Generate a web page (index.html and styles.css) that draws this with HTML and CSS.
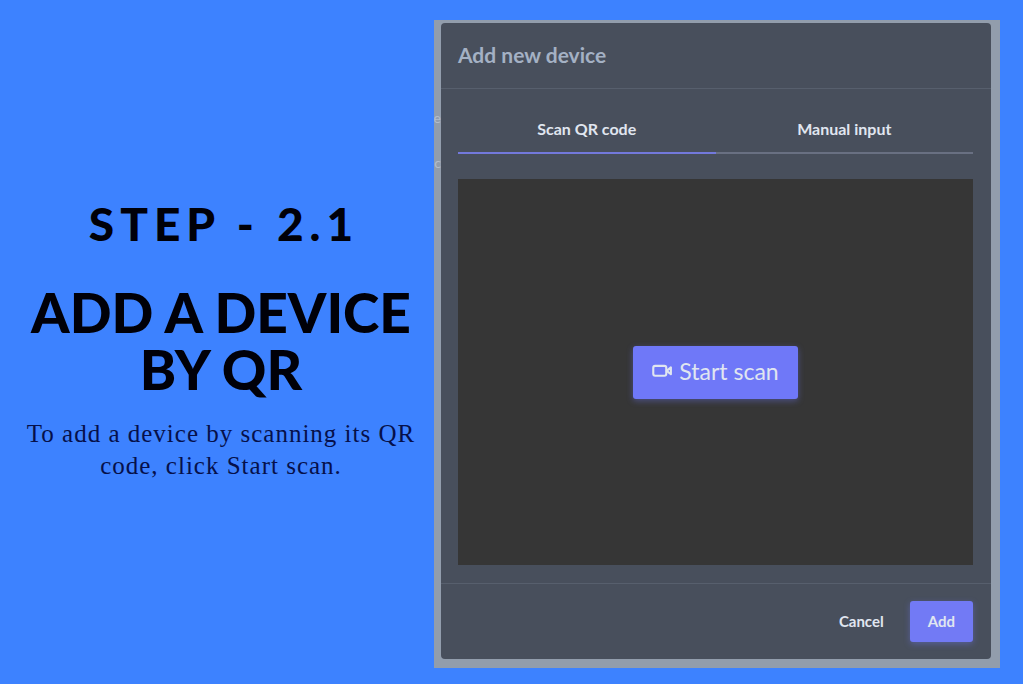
FILE: index.html
```html
<!DOCTYPE html>
<html lang="en">
<head>
<meta charset="utf-8">
<meta name="viewport" content="width=device-width, initial-scale=1">
<title>Add a device by QR</title>
<link rel="stylesheet" href="styles.css">
</head>
<body>
<main class="slide">
  <section class="intro">
    <p class="step">STEP - 2.1</p>
    <h1 class="title">ADD A DEVICE<br>BY QR</h1>
    <p class="lead">To add a device by scanning its QR<br>code, click Start scan.</p>
  </section>
  <div class="backdrop">
    <span class="ghost ghost-first" aria-hidden="true">te</span>
    <span class="ghost ghost-second" aria-hidden="true">c</span>
    <section class="dialog" role="dialog" aria-labelledby="dialog-title">
      <header class="dialog-header">
        <h2 class="dialog-title" id="dialog-title">Add new device</h2>
      </header>
      <div class="dialog-body">
        <div class="tabs" role="tablist">
          <button class="tab tab-active" type="button" role="tab" aria-selected="true">Scan QR code</button>
          <button class="tab" type="button" role="tab" aria-selected="false">Manual input</button>
        </div>
        <div class="scanner">
          <button class="scan-button" type="button">
            <svg class="camera" viewBox="0 0 20 14" aria-hidden="true">
              <rect x="1.2" y="1.8" width="12.4" height="9.4" rx="1.8"/>
              <path d="M14 6.5 18 3.2v6.6Z"/>
            </svg>
            <span>Start scan</span>
          </button>
        </div>
      </div>
      <footer class="dialog-footer">
        <button class="cancel" type="button">Cancel</button>
        <button class="add" type="button">Add</button>
      </footer>
    </section>
  </div>
</main>
</body>
</html>
```
FILE: styles.css
```css
* { box-sizing: border-box; }
body {
  margin: 0;
  background: #3d82ff;
  font-family: Lato, "Open Sans", sans-serif;
}
button {
  border: 0;
  padding: 0;
  background: none;
  color: #e0e6f0;
  font: inherit;
  cursor: pointer;
}
.slide {
  display: grid;
  grid-template-columns: 434fr 566fr;
  min-height: 100vh;
  padding: 20px 23px 16px 0;
}
.intro {
  display: flex;
  flex-direction: column;
  justify-content: center;
  padding: 0 0 10px 8px;
  color: #000008;
  text-align: center;
}
.step {
  margin: 0 0 32px;
  padding-left: 6px;
  font-size: 46px;
  font-weight: 900;
  line-height: 56px;
  letter-spacing: 6px;
}
.title {
  margin: 0 0 20px;
  font-size: 55px;
  font-weight: 900;
  line-height: 57px;
}
.lead {
  margin: 0;
  color: #06104a;
  font-family: "Liberation Serif", serif;
  font-size: 25px;
  line-height: 32px;
  letter-spacing: 1px;
}
.backdrop {
  position: relative;
  display: flex;
  overflow: hidden;
  padding: 3px 9px 9px 7px;
  background: #929dac;
}
.ghost {
  position: absolute;
  right: calc(100% - 7px);
  color: #b3bcca;
  font-size: 14px;
  line-height: 20px;
}
.ghost-first { top: 88px; }
.ghost-second { top: 133px; }
.dialog {
  position: relative;
  display: flex;
  flex: 1;
  flex-direction: column;
  border-radius: 4px;
  background: #484f5c;
}
.dialog-header {
  padding: 17px 17px 19px;
  border-bottom: 1px solid #575f6d;
}
.dialog-title {
  margin: 0;
  color: #a4b1c4;
  font-size: 21px;
  font-weight: 700;
  line-height: 29px;
}
.dialog-body {
  display: flex;
  flex: 1;
  flex-direction: column;
  gap: 25px;
  padding: 17px 18px 18px 17px;
}
.tabs {
  display: grid;
  grid-template-columns: 1fr 1fr;
}
.tab {
  height: 48px;
  padding-bottom: 2px;
  border-bottom: 2px solid #697082;
  font-size: 16px;
  font-weight: 700;
}
.tab-active { border-color: #7379dc; }
.scanner {
  display: flex;
  flex: 1;
  align-items: center;
  justify-content: center;
  background: #363636;
}
.scan-button {
  display: flex;
  align-items: center;
  gap: 6px;
  padding: 11px 19px 13px;
  border-radius: 3px;
  background: #6f78f8;
  box-shadow: 0 2px 6px #6f78f866;
  font-size: 23px;
  line-height: 29px;
}
.camera {
  width: 21px;
  fill: none;
  stroke: #e0e6f0;
  stroke-width: 2;
  stroke-linejoin: round;
}
.dialog-footer {
  display: flex;
  align-items: center;
  justify-content: flex-end;
  gap: 26px;
  padding: 17px 18px;
  border-top: 1px solid #575f6d;
  font-size: 15px;
  font-weight: 700;
}
.cancel {
  padding-bottom: 2px;
}
.add {
  padding: 10px 18px;
  border-radius: 3px;
  background: #727af5;
  box-shadow: 0 2px 6px #6f78f866;
  line-height: 21px;
}
```
